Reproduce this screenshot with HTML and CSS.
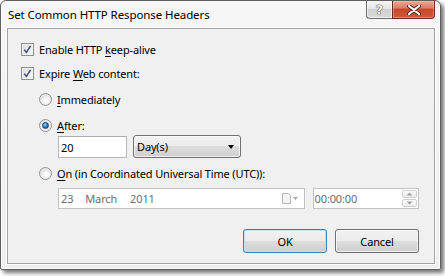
FILE: index.html
```html
<!DOCTYPE html>
<html>
<head>
<meta charset="utf-8">
<link rel="stylesheet" href="styles.css">
</head>
<body>
<div class="window">
  <div class="titlebar">
    <span class="title">Set Common HTTP Response Headers</span>
    <div class="caption-btns">
      <div class="cbtn help"><span>?</span></div>
      <div class="cbtn close">
        <svg width="14" height="10" viewBox="0 0 14 10">
          <path d="M2 1 L12 9 M12 1 L2 9" stroke="#5a2318" stroke-width="4" stroke-linecap="round"/>
          <path d="M2 1 L12 9 M12 1 L2 9" stroke="#ffffff" stroke-width="2.2" stroke-linecap="round"/>
        </svg>
      </div>
    </div>
  </div>
  <div class="client">
    <div class="row r1">
      <span class="chk"><svg width="11" height="11" viewBox="0 0 11 11"><path d="M2.3 5.6 L4.4 8.4 L8.6 1.8" fill="none" stroke="#3c4f80" stroke-width="1.5"/></svg></span>
      <span>Enable HTTP <u>k</u>eep-alive</span>
    </div>
    <div class="row r2">
      <span class="chk"><svg width="11" height="11" viewBox="0 0 11 11"><path d="M2.3 5.6 L4.4 8.4 L8.6 1.8" fill="none" stroke="#3c4f80" stroke-width="1.5"/></svg></span>
      <span>Expire <u>W</u>eb content:</span>
    </div>
    <div class="row r3 ind1">
      <span class="radio"></span>
      <span><u>I</u>mmediately</span>
    </div>
    <div class="row r4 ind1">
      <span class="radio on"><span class="dot"></span></span>
      <span><u>A</u>fter:</span>
    </div>
    <div class="row r5 ind2">
      <div class="textbox">20</div>
      <div class="combo"><span>Day(s)</span><span class="arrow"></span></div>
    </div>
    <div class="row r6 ind1">
      <span class="radio"></span>
      <span><u>O</u>n (in Coordinated Universal Time (UTC)):</span>
    </div>
    <div class="row r7 ind2">
      <div class="datebox">
        <span class="d">23</span><span class="m">March</span><span class="y">2011</span>
        <span class="cal">
          <svg width="18" height="11" viewBox="0 0 18 11">
            <path d="M1.5 0.5 H7.5 L9.5 2.5 V10.5 H1.5 Z" fill="#f4f4f4" stroke="#b4b4b4"/>
            <path d="M12 4 H17 L14.5 7 Z" fill="#a8a8a8"/>
          </svg>
        </span>
      </div>
      <div class="timebox">
        <span>00:00:00</span>
        <div class="spin">
          <div class="sb"><svg width="7" height="4" viewBox="0 0 7 4"><path d="M0.5 3.5 L3.5 0.5 L6.5 3.5 Z" fill="#a0a0a0"/></svg></div>
          <div class="sb"><svg width="7" height="4" viewBox="0 0 7 4"><path d="M0.5 0.5 L3.5 3.5 L6.5 0.5 Z" fill="#a0a0a0"/></svg></div>
        </div>
      </div>
    </div>
    <div class="row buttons">
      <div class="btn default">OK</div>
      <div class="btn">Cancel</div>
    </div>
  </div>
</div>
</body>
</html>
```
FILE: styles.css
```css
* { box-sizing: border-box; }
html, body {
  margin: 0;
  padding: 0;
  background: #ffffff;
}
body {
  width: 445px;
  height: 276px;
  overflow: hidden;
  font-family: "Noto Sans", "Open Sans", sans-serif;
  font-size: 11px;
  letter-spacing: -0.15px;
  color: #000;
}
.window {
  width: 441px;
  height: 270px;
  border: 1px solid #5f5f5f;
  border-radius: 6px 6px 2px 2px;
  background: linear-gradient(#f6f6f6, #efefef);
  box-shadow: 3px 3px 4px rgba(0,0,0,0.55), inset 0 0 0 1px #fbfbfb;
  display: flex;
  flex-direction: column;
  padding: 0 5px 5px 6px;
}
.titlebar {
  height: 27px;
  display: flex;
  align-items: center;
  padding-left: 1px;
}
.title {
  font-size: 11.5px;
  letter-spacing: -0.1px;
  color: #000;
  margin-top: -1px;
}
.caption-btns {
  margin-left: auto;
  align-self: flex-start;
  display: flex;
}
.cbtn {
  height: 18px;
  display: flex;
  align-items: center;
  justify-content: center;
  border: 1px solid #6c6c6c;
  border-top: none;
}
.help {
  width: 26px;
  border-radius: 0 0 0 4px;
  border-right: none;
  background: linear-gradient(#f4f4f4 0%, #e6e6e6 45%, #d0d0d0 50%, #dadada 100%);
  box-shadow: inset 0 0 0 1px rgba(255,255,255,0.6);
}
.help span {
  font-family: "DejaVu Sans", sans-serif;
  font-size: 12px;
  font-weight: bold;
  color: #f4f4f4;
  text-shadow: 0 0 1px #555, 0 0 1px #555, 0 0 1px #555;
  line-height: 1;
}
.close {
  width: 43px;
  border-radius: 0 0 4px 0;
  border-color: #6b2a1e;
  background: linear-gradient(#eaa896 0%, #dd7e66 40%, #c8472c 50%, #cf5a3c 100%);
  box-shadow: inset 0 0 0 1px rgba(255,220,210,0.35);
}
.client {
  flex: 1;
  border: 1px solid #a3a3a3;
  box-shadow: 0 0 0 1px #ffffff;
  background: #f0f0f0;
  display: flex;
  flex-direction: column;
  padding: 12px 15px 0 13px;
}
.row {
  display: flex;
  align-items: center;
  height: 16px;
  gap: 5px;
}
.r2 { margin-top: 8px; }
.r3 { margin-top: 10px; }
.r4 { margin-top: 10px; }
.r5 { margin-top: 2px; height: 23px; gap: 6px; }
.r6 { margin-top: 7px; }
.r7 { margin-top: 7px; height: 21px; gap: 8px; }
.buttons { margin-top: 20px; height: 24px; justify-content: flex-end; gap: 8px; }
.ind1 { padding-left: 18px; }
.ind2 { padding-left: 37px; }
u { text-decoration-thickness: 1px; text-underline-offset: 2px; }

.chk {
  width: 13px;
  height: 13px;
  border: 1px solid #8e8f8f;
  background: linear-gradient(135deg, #dadada, #f8f8f8);
  box-shadow: inset 0 0 0 1px #f3f3f3;
  display: flex;
  align-items: center;
  justify-content: center;
  flex: none;
}
.radio {
  width: 13px;
  height: 13px;
  border-radius: 50%;
  border: 1px solid #939393;
  background: radial-gradient(circle at 60% 65%, #ffffff 0%, #f0f0f0 40%, #c8c8c8 100%);
  box-shadow: inset 0 0 0 1px #ececec;
  display: flex;
  align-items: center;
  justify-content: center;
  flex: none;
}
.radio .dot {
  width: 7px;
  height: 7px;
  border-radius: 50%;
  background: radial-gradient(circle at 40% 35%, #9fe0ff 0%, #2c86cf 45%, #0d3f84 100%);
  border: 1px solid #1f3f6a;
}
.textbox {
  width: 69px;
  height: 22px;
  margin-top: 1px;
  border: 1px solid #b5b8bf;
  border-top-color: #abadb3;
  background: #fff;
  padding-left: 2px;
  display: flex;
  align-items: center;
}
.combo {
  width: 108px;
  height: 23px;
  border: 1px solid #707070;
  border-radius: 3px;
  background: linear-gradient(#f2f2f2 0%, #ebebeb 50%, #dddddd 50%, #cfcfcf 100%);
  box-shadow: inset 0 0 0 1px rgba(255,255,255,0.7);
  display: flex;
  align-items: center;
  padding-left: 3px;
  padding-right: 6px;
}
.combo .arrow {
  margin-left: auto;
  width: 0;
  height: 0;
  border-left: 3.5px solid transparent;
  border-right: 3.5px solid transparent;
  border-top: 4px solid #000;
}
.datebox {
  width: 248px;
  height: 21px;
  border: 1px solid #c3c3c3;
  background: #fff;
  display: flex;
  align-items: center;
  padding-left: 2px;
  color: #6d6d6d;
}
.datebox .m { margin-left: 12px; }
.datebox .y { margin-left: 13px; }
.datebox .cal { margin-left: auto; margin-right: 5px; display: flex; }
.timebox {
  width: 107px;
  height: 21px;
  border: 1px solid #c3c3c3;
  background: #fff;
  display: flex;
  align-items: center;
  padding-left: 1px;
  color: #6a6a78;
}
.spin {
  margin-left: auto;
  margin-right: 1px;
  display: flex;
  flex-direction: column;
  gap: 1px;
}
.sb {
  width: 15px;
  height: 8px;
  border: 1px solid #d0d0d0;
  border-radius: 2px;
  background: linear-gradient(#fafafa, #ececec);
  display: flex;
  align-items: center;
  justify-content: center;
}
.btn {
  width: 84px;
  height: 24px;
  border: 1px solid #707070;
  border-radius: 3px;
  background: linear-gradient(#f2f2f2 0%, #ebebeb 50%, #dddddd 50%, #cfcfcf 100%);
  box-shadow: inset 0 0 0 1px rgba(255,255,255,0.7);
  display: flex;
  align-items: center;
  justify-content: center;
}
.btn.default {
  border-color: #3c7fb1;
  box-shadow: inset 0 0 0 1px #b8e4f7;
}
```
